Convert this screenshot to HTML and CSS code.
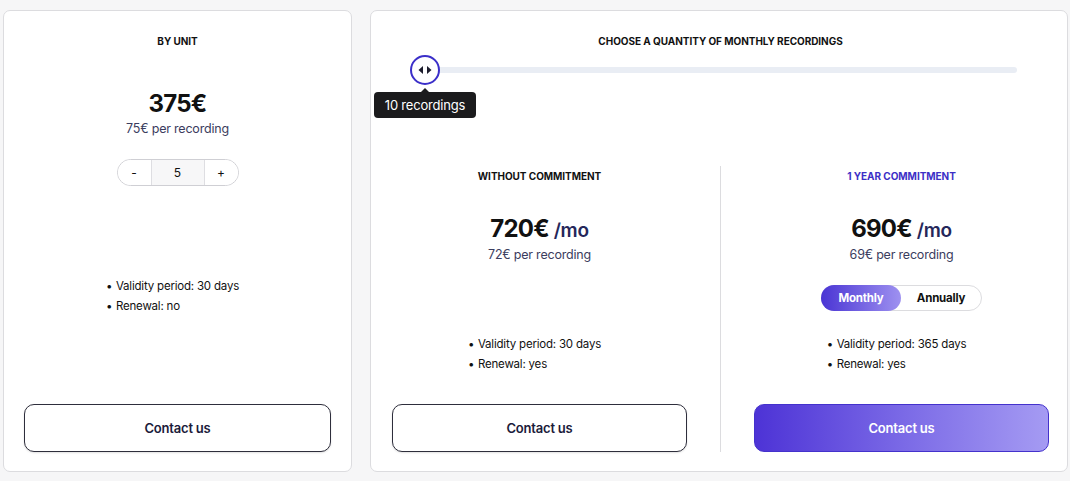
FILE: index.html
```html
<!DOCTYPE html>
<html lang="en">
<head>
<meta charset="utf-8">
<title>Pricing</title>
<link rel="stylesheet" href="styles.css">
</head>
<body>
<div class="page">
  <section class="card card-unit">
    <h2 class="title">BY UNIT</h2>
    <div class="price">375€</div>
    <div class="per">75€ per recording</div>
    <div class="stepper">
      <button class="step">-</button>
      <div class="qty">5</div>
      <button class="step">+</button>
    </div>
    <ul class="bullets unit-bullets">
      <li>Validity period: 30 days</li>
      <li>Renewal: no</li>
    </ul>
    <button class="btn btn-outline">Contact us</button>
  </section>

  <section class="card card-monthly">
    <h2 class="title">CHOOSE A QUANTITY OF MONTHLY RECORDINGS</h2>
    <div class="slider">
      <div class="track"></div>
      <div class="thumb">
        <svg width="14" height="10" viewBox="0 0 14 10"><path d="M5 1 L0.5 5 L5 9 Z M9 1 L13.5 5 L9 9 Z" fill="#1c1c2c"/></svg>
        <div class="tip">10 recordings</div>
      </div>
    </div>
    <div class="plans">
      <div class="plan">
        <h3 class="title">WITHOUT COMMITMENT</h3>
        <div class="price">720€ <span class="mo">/mo</span></div>
        <div class="per">72€ per recording</div>
        <div class="toggle-slot"></div>
        <ul class="bullets">
          <li>Validity period: 30 days</li>
          <li>Renewal: yes</li>
        </ul>
        <button class="btn btn-outline">Contact us</button>
      </div>
      <div class="divider"></div>
      <div class="plan">
        <h3 class="title title-accent">1 YEAR COMMITMENT</h3>
        <div class="price">690€ <span class="mo">/mo</span></div>
        <div class="per">69€ per recording</div>
        <div class="toggle">
          <span class="opt opt-on">Monthly</span>
          <span class="opt">Annually</span>
        </div>
        <ul class="bullets">
          <li>Validity period: 365 days</li>
          <li>Renewal: yes</li>
        </ul>
        <button class="btn btn-primary">Contact us</button>
      </div>
    </div>
  </section>
</div>
</body>
</html>
```

FILE: styles.css
```css
* { box-sizing: border-box; }
html, body { margin: 0; padding: 0; }
body {
  background: #f6f6f7;
  font-family: Inter, "Noto Sans", sans-serif;
  color: #111;
  width: 1070px;
  height: 481px;
  overflow: hidden;
}
.page {
  display: flex;
  gap: 18px;
  padding: 10px 0 0 3px;
  align-items: flex-start;
}
.card {
  background: #fff;
  border: 1px solid #dcdcdf;
  border-radius: 7px;
  height: 462px;
  display: flex;
  flex-direction: column;
  align-items: center;
}
.card-unit {
  width: 349px;
  padding: 23px 20px 19px;
}
.card-monthly {
  width: 698px;
  padding: 23px 18px 19px 21px;
}
.title {
  margin: 0;
  font-size: 10px;
  line-height: 14px;
  font-weight: 700;
  letter-spacing: -0.05px;
  text-align: center;
  color: #111;
}
.title-accent { color: #3c2fc6; }
.price {
  margin-top: 41px;
  font-size: 24px;
  line-height: 30px;
  font-weight: 700;
  letter-spacing: -0.8px;
  text-align: center;
}
.mo {
  font-size: 19px;
  font-weight: 600;
  color: #25275a;
  letter-spacing: -0.3px;
}
.per {
  margin-top: 1px;
  font-size: 12.5px;
  line-height: 18px;
  color: #3b3d5e;
  text-align: center;
  letter-spacing: -0.2px;
}
.stepper {
  margin-top: 21px;
  display: flex;
  width: 122px;
  height: 27px;
  border: 1px solid #cfcfd4;
  border-radius: 14px;
  overflow: hidden;
}
.step {
  width: 33px;
  border: 0;
  background: #fff;
  font-family: inherit;
  font-size: 12px;
  color: #111;
  padding: 0;
}
.qty {
  flex: 1;
  background: #f7f7f8;
  border-left: 1px solid #dedee2;
  border-right: 1px solid #dedee2;
  font-size: 12px;
  display: flex;
  align-items: center;
  justify-content: center;
}
.bullets {
  list-style: none;
  margin: 0 10px 0 0;
  padding: 0;
  font-size: 11.5px;
  line-height: 20px;
  color: #111;
  letter-spacing: -0.2px;
}
.bullets li::before {
  content: "•";
  display: inline-block;
  width: 10px;
}
.unit-bullets { margin-top: 90px; }
.btn {
  margin-top: auto;
  width: 100%;
  height: 48px;
  border-radius: 10px;
  font-family: inherit;
  font-size: 13px;
  font-weight: 600;
  letter-spacing: -0.2px;
  cursor: pointer;
}
.btn-outline {
  background: #fff;
  border: 1px solid #2e2e3c;
  color: #1b1b3a;
  box-shadow: 0 1px 2px rgba(0,0,0,0.12);
}
.btn-primary {
  background: linear-gradient(90deg, #4d33d6 0%, #7a69e6 50%, #a59bf3 100%);
  border: 1px solid #4432cc;
  color: #fff;
}
.slider {
  position: relative;
  align-self: stretch;
  margin: 7px 32px 0 19px;
  height: 30px;
}
.track {
  position: absolute;
  left: 0;
  right: 0;
  top: 12px;
  height: 6px;
  border-radius: 3px;
  background: #e9edf4;
}
.thumb {
  position: absolute;
  left: -1px;
  top: 0;
  width: 30px;
  height: 30px;
  border-radius: 50%;
  border: 2px solid #3b2fc9;
  background: #fff;
  display: flex;
  align-items: center;
  justify-content: center;
}
.tip {
  position: absolute;
  top: 35px;
  left: 50%;
  transform: translateX(-50%);
  width: 102px;
  height: 26px;
  background: #1b1b1d;
  color: #fff;
  border-radius: 4px;
  font-size: 13px;
  line-height: 26px;
  text-align: center;
  white-space: nowrap;
  letter-spacing: -0.2px;
}
.tip::before {
  content: "";
  position: absolute;
  top: -4px;
  left: 50%;
  margin-left: -4px;
  border-left: 4px solid transparent;
  border-right: 4px solid transparent;
  border-bottom: 4px solid #1b1b1d;
}
.plans {
  margin-top: 81px;
  align-self: stretch;
  flex: 1;
  display: grid;
  grid-template-columns: 1fr 1px 1fr;
  column-gap: 33px;
}
.divider { background: #dcdcdf; }
.plan {
  display: flex;
  flex-direction: column;
  align-items: center;
  padding-top: 3px;
}
.plan .price { margin-top: 31px; }
.plan .per { margin-top: 0; }
.toggle-slot { height: 26px; margin-top: 21px; }
.toggle {
  margin-top: 21px;
  height: 26px;
  width: 161px;
  display: flex;
  border: 1px solid #dcdcdf;
  border-radius: 13px;
}
.opt {
  flex: 1;
  display: flex;
  align-items: center;
  justify-content: center;
  font-size: 11.5px;
  font-weight: 700;
  color: #111;
  letter-spacing: -0.2px;
}
.opt-on {
  margin: -1px 0 -1px -1px;
  border-radius: 13px;
  color: #fff;
  background: linear-gradient(90deg, #4a35d4 0%, #9e91f0 100%);
}
.plan .bullets { margin-top: 23px; }
```
